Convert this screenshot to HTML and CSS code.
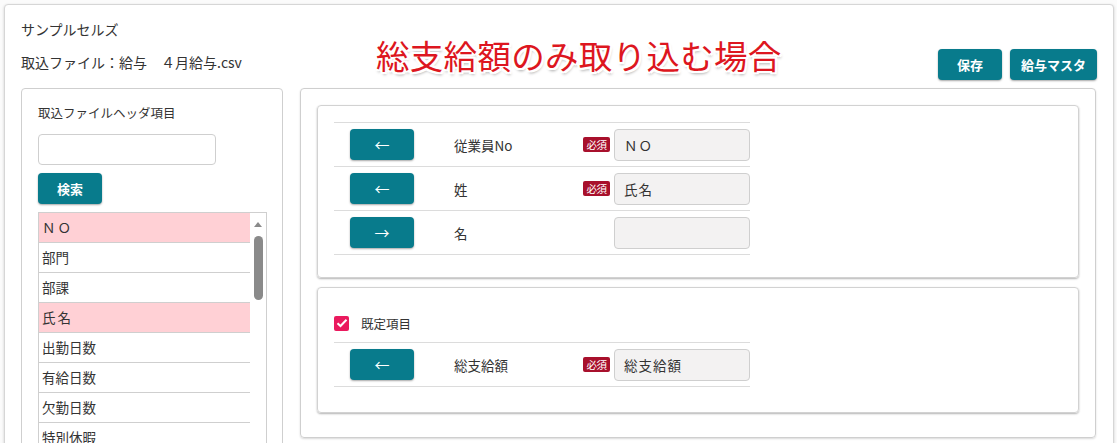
FILE: index.html
```html
<!DOCTYPE html>
<html lang="ja">
<head>
<meta charset="utf-8">
<title>取込設定</title>
<link rel="stylesheet" href="styles.css">
</head>
<body>
<div class="page">
  <div class="header">
    <div class="info">
      <div class="company">サンプルセルズ</div>
      <div class="file">取込ファイル：給与　４月給与.csv</div>
    </div>
    <div class="annot">総支給額のみ取り込む場合</div>
    <div class="actions">
      <button class="btn btn-save">保存</button>
      <button class="btn btn-master">給与マスタ</button>
    </div>
  </div>
  <div class="main">
    <div class="left">
      <div class="left-label">取込ファイルヘッダ項目</div>
      <input class="search" type="text">
      <button class="btn btn-search">検索</button>
      <div class="list">
        <div class="items">
          <div class="item hl">ＮＯ</div>
          <div class="item">部門</div>
          <div class="item">部課</div>
          <div class="item hl">氏名</div>
          <div class="item">出勤日数</div>
          <div class="item">有給日数</div>
          <div class="item">欠勤日数</div>
          <div class="item">特別休暇</div>
        </div>
        <div class="scroll">
          <div class="arrow"></div>
          <div class="thumb"></div>
        </div>
      </div>
    </div>
    <div class="right">
      <div class="card card1">
        <div class="row">
          <button class="btn btn-arrow">←</button>
          <div class="field">従業員No</div>
          <span class="req">必須</span>
          <div class="value">ＮＯ</div>
        </div>
        <div class="row">
          <button class="btn btn-arrow">←</button>
          <div class="field">姓</div>
          <span class="req">必須</span>
          <div class="value">氏名</div>
        </div>
        <div class="row">
          <button class="btn btn-arrow">→</button>
          <div class="field">名</div>
          <span class="req blank"></span>
          <div class="value"></div>
        </div>
      </div>
      <div class="card card2">
        <label class="check">
          <span class="box"><svg width="12" height="10" viewBox="0 0 12 10"><path d="M1.5 5.2 L4.5 8 L10.5 1.8" fill="none" stroke="#fff" stroke-width="2"/></svg></span>
          <span class="check-text">既定項目</span>
        </label>
        <div class="rows">
          <div class="row">
            <button class="btn btn-arrow">←</button>
            <div class="field">総支給額</div>
            <span class="req">必須</span>
            <div class="value">総支給額</div>
          </div>
        </div>
      </div>
    </div>
  </div>
</div>
</body>
</html>
```

FILE: styles.css
```css
html, body {
  margin: 0;
  padding: 0;
  background: #fbfbfb;
  overflow: hidden;
  height: 443px;
}
body {
  font-family: "Noto Sans CJK JP", "Noto Sans", sans-serif;
  color: #333;
  font-size: 13px;
}
.page {
  position: relative;
  margin: 4px 4px 0 4px;
  width: 1110px;
  background: #fff;
  border: 1px solid #d6d6d6;
  border-radius: 4px;
  box-shadow: 0 1px 3px rgba(0,0,0,0.18);
  padding: 0 16px;
  box-sizing: border-box;
  height: 600px;
}
.header {
  display: flex;
  justify-content: space-between;
  align-items: flex-start;
  height: 83px;
}
.info {
  padding-top: 13px;
}
.company {
  font-size: 14px;
  line-height: 22px;
  height: 22px;
}
.file {
  margin-top: 11px;
  font-size: 14px;
  line-height: 22px;
}
.annot {
  position: absolute;
  left: 371px;
  top: 26px;
  font-size: 33.5px;
  line-height: 48px;
  font-weight: 400;
  color: #dd1620;
  letter-spacing: 0.3px;
  text-shadow:
    2px 0 0 #fff, -2px 0 0 #fff, 0 2px 0 #fff, 0 -2px 0 #fff,
    2px 2px 0 #fff, -2px -2px 0 #fff, 2px -2px 0 #fff, -2px 2px 0 #fff,
    1px 3px 3px rgba(0,0,0,0.35);
}
.actions {
  display: flex;
  gap: 8px;
  padding-top: 44px;
}
.btn {
  font-family: "Noto Sans CJK JP", "Noto Sans", sans-serif;
  background: #087b8c;
  color: #fff;
  border: none;
  border-radius: 4px;
  font-size: 13px;
  font-weight: 700;
  box-shadow: 0 1px 2px rgba(0,0,0,0.35);
  padding: 0;
  cursor: pointer;
}
.btn-save { width: 64px; height: 31px; }
.btn-master { width: 87px; height: 31px; }
.main {
  display: flex;
  align-items: flex-start;
  gap: 17px;
}
.left {
  width: 262px;
  box-sizing: border-box;
  border: 1px solid #cfcfcf;
  border-radius: 4px;
  padding: 14px 16px 0 16px;
  height: 420px;
  display: flex;
  flex-direction: column;
  align-items: flex-start;
}
.left-label {
  font-size: 12.5px;
  line-height: 20px;
}
.search {
  margin-top: 11px;
  width: 178px;
  height: 31px;
  box-sizing: border-box;
  border: 1px solid #cfcfcf;
  border-radius: 4px;
  background: #fff;
}
.btn-search {
  margin-top: 8px;
  width: 64px;
  height: 31px;
}
.list {
  margin-top: 8px;
  width: 229px;
  box-sizing: border-box;
  border: 1px solid #cfcfcf;
  display: flex;
}
.items {
  flex: 1;
}
.item {
  height: 29px;
  line-height: 29px;
  border-bottom: 1px solid #cfcfcf;
  padding-left: 3px;
  font-size: 13.5px;
  color: #333;
}
.item.hl {
  background: #ffd0d5;
  letter-spacing: 2px;
}
.scroll {
  width: 16px;
  display: flex;
  flex-direction: column;
  align-items: center;
  background: #fff;
}
.arrow {
  margin-top: 9px;
  width: 0;
  height: 0;
  border-left: 4px solid transparent;
  border-right: 4px solid transparent;
  border-bottom: 5px solid #8a8a8a;
}
.thumb {
  margin-top: 9px;
  width: 9px;
  height: 64px;
  border-radius: 5px;
  background: #8a8a8a;
}
.right {
  width: 796px;
  box-sizing: border-box;
  border: 1px solid #cfcfcf;
  border-radius: 4px;
  padding: 16px 16px 24px 16px;
  box-shadow: 0 1px 2px rgba(0,0,0,0.15);
  display: flex;
  flex-direction: column;
  gap: 9px;
}
.card {
  border: 1px solid #d2d2d2;
  border-radius: 4px;
  box-shadow: 0 1px 2px rgba(0,0,0,0.3);
  padding: 16px 16px 22px 16px;
}
.card1 {
  height: 173px;
  box-sizing: border-box;
}
.row {
  width: 416px;
  height: 43px;
  border-top: 1px solid #dcdcdc;
  display: flex;
  align-items: center;
}
.row:last-child {
  border-bottom: 1px solid #dcdcdc;
}
.btn-arrow {
  margin-left: 16px;
  width: 64px;
  height: 31px;
  font-size: 15px;
  font-weight: 400;
}
.field {
  margin-left: 40px;
  width: 129px;
  font-size: 13.5px;
  color: #333;
}
.req {
  width: 27px;
  height: 15px;
  background: #a8102c;
  color: #fff;
  font-size: 10.5px;
  line-height: 15px;
  text-align: center;
  border-radius: 2px;
  letter-spacing: -0.5px;
}
.req.blank {
  background: transparent;
}
.value {
  margin-left: 4px;
  width: 136px;
  height: 32px;
  box-sizing: border-box;
  border: 1px solid #cfcfcf;
  border-radius: 4px;
  background: #f3f2f2;
  font-size: 13.5px;
  line-height: 30px;
  padding-left: 9px;
  letter-spacing: 1px;
}
.card2 {
  padding-top: 26px;
  padding-bottom: 25px;
}
.check {
  display: flex;
  align-items: center;
  height: 18px;
  margin-bottom: 10px;
}
.box {
  width: 15px;
  height: 15px;
  background: #ea1a5e;
  border-radius: 2px;
  display: flex;
  align-items: center;
  justify-content: center;
}
.check-text {
  margin-left: 12px;
  font-size: 12.5px;
}
```
